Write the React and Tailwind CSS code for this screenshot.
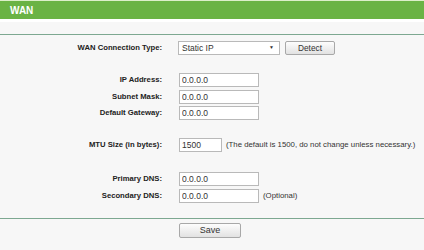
import React from 'react';

const font = { fontFamily: '"Liberation Sans", Arial, sans-serif' };

function Field({ value, width = 'w-[80px]' }) {
  return (
    <input
      readOnly
      defaultValue={value}
      className={`${width} h-[14px] bg-white border border-[#b9b9b9] pl-[2px] text-[8.5px] text-[#333] outline-none`}
      style={font}
    />
  );
}

function Row({ label, children, className = '' }) {
  return (
    <div className={`flex items-center h-[14px] ${className}`}>
      <div className="w-[162px] text-right font-bold text-[7.7px] text-[#222]">{label}</div>
      <div className="ml-[17px] flex items-center">{children}</div>
    </div>
  );
}

function Button({ children, className = '' }) {
  return (
    <button
      className={`flex items-center justify-center border border-[#a8a8a8] rounded-[2px] bg-gradient-to-b from-[#fdfdfd] to-[#e2e2e2] text-[#333] ${className}`}
      style={font}
    >
      {children}
    </button>
  );
}

export default function App() {
  return (
    <div className="w-[424px] h-[250px] bg-[#f7f7f7] overflow-hidden" style={font}>
      <div className="h-[1px] bg-[#dcefc9]" />
      <div className="h-[18px] bg-[#6ab344] text-white font-bold text-[10px] pl-[10px] flex items-center">WAN</div>
      <div className="h-[3px] bg-white" />
      <div className="h-[12px]" />
      <div className="h-[1px] bg-[#7da891]" />

      <Row label="WAN Connection Type:" className="mt-[6px]">
        <div className="w-[102px] h-[14px] -ml-[1px] bg-white border border-[#b9b9b9] flex items-center justify-between pl-[3px] pr-[5px] text-[8.5px] text-[#333]">
          <span>Static IP</span>
          <span className="text-[5px]">▼</span>
        </div>
        <Button className="ml-[5px] w-[50px] h-[14px] text-[8.3px]">Detect</Button>
      </Row>

      <Row label="IP Address:" className="mt-[18px]"><Field value="0.0.0.0" /></Row>
      <Row label="Subnet Mask:" className="mt-[2.5px]"><Field value="0.0.0.0" /></Row>
      <Row label="Default Gateway:" className="mt-[2.5px]"><Field value="0.0.0.0" /></Row>

      <Row label="MTU Size (in bytes):" className="mt-[18px]">
        <Field value="1500" width="w-[43px]" />
        <span className="ml-[4px] text-[7.8px] text-[#333] whitespace-nowrap">(The default is 1500, do not change unless necessary.)</span>
      </Row>

      <Row label="Primary DNS:" className="mt-[20px]"><Field value="0.0.0.0" /></Row>
      <Row label="Secondary DNS:" className="mt-[3px]">
        <Field value="0.0.0.0" />
        <span className="ml-[4px] text-[7.8px] text-[#333]">(Optional)</span>
      </Row>

      <div className="h-[1px] bg-[#7da891] mt-[15px]" />
      <div className="pl-[179px] mt-[4px]">
        <Button className="w-[62px] h-[15px] text-[9px]">Save</Button>
      </div>
    </div>
  );
}
